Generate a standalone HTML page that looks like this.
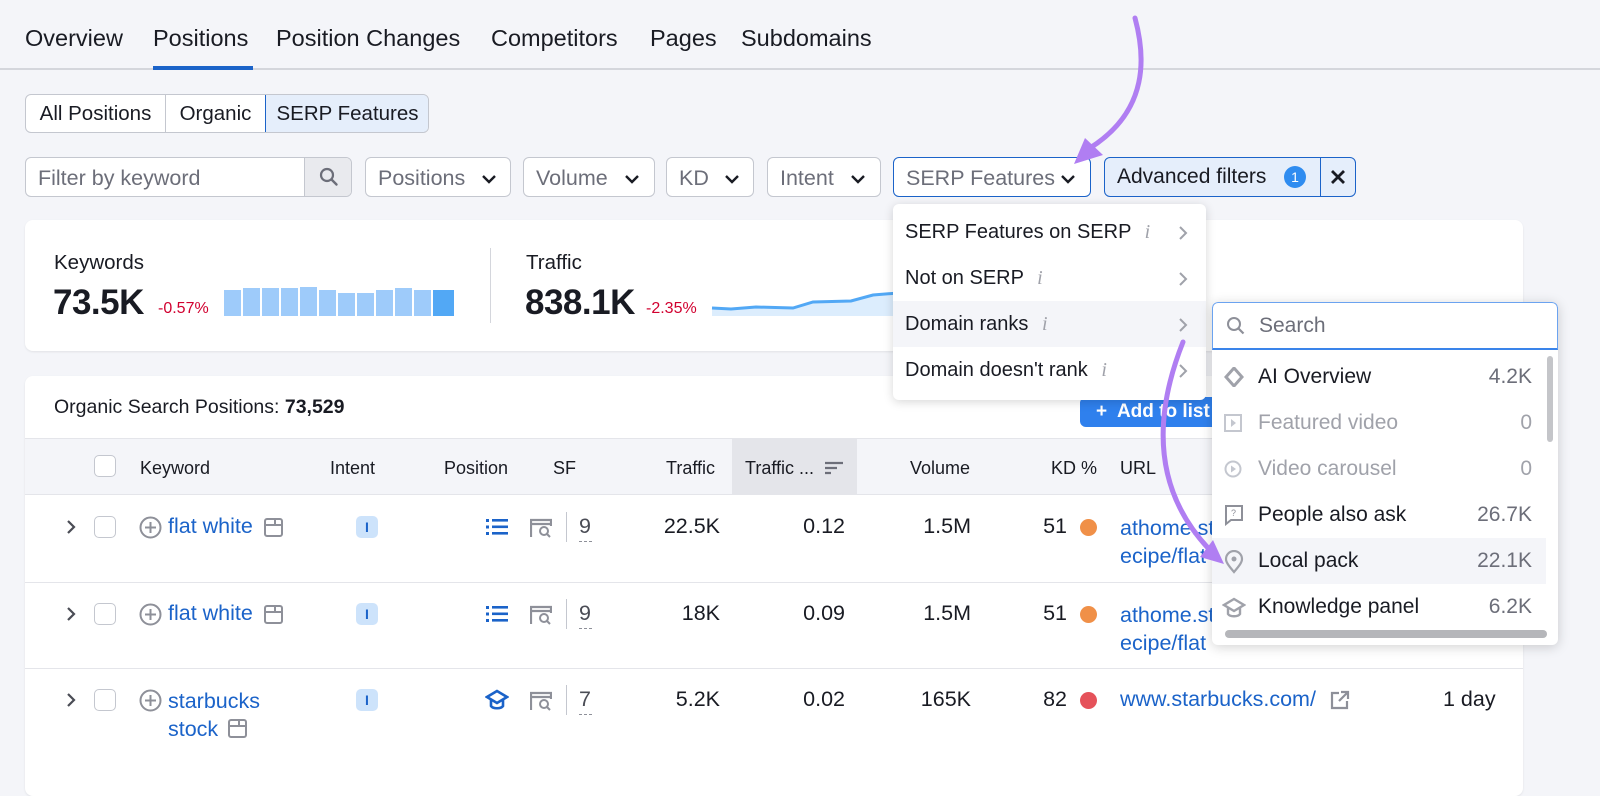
<!DOCTYPE html>
<html><head><meta charset="utf-8"><style>
*{box-sizing:border-box;margin:0;padding:0}
body{width:1600px;height:775px;overflow:hidden;background:#f4f5f9;font-family:"Liberation Sans",sans-serif;color:#191b23;position:relative}
.a{position:absolute}
.tab{position:absolute;top:25px;font-size:23.5px;color:#191b23}
.box{position:absolute;background:#fff;border:1px solid #c4c7cf;border-radius:6px}
.ft{position:absolute;font-size:21.5px;color:#6c6e79;top:8px}
.chev{position:absolute;top:16px}
.t20{font-size:21.5px;position:absolute}
.hd{position:absolute;top:19px;font-size:18px;color:#191b23}
.link{color:#1b63c9}
.cb{position:absolute;width:22px;height:22px;border:1.5px solid #c4c7cf;border-radius:5px;background:#fff}
.badge{position:absolute;width:22px;height:22px;border-radius:5px;background:#cde3fb;color:#1b63c9;font-size:14px;font-weight:bold;text-align:center;line-height:22px}
.num{position:absolute;font-size:21.5px;text-align:right}
.mi{position:absolute;left:0;width:313px;height:46px;font-size:20px;padding-left:12px;line-height:46px}
.si{position:absolute;left:0;width:334px;height:46px;font-size:21px;line-height:46px}
.si span.n{position:absolute;left:46px}
.si span.v{position:absolute;right:14px;color:#6c6e79}
</style></head><body>

<div class="tab" style="left:25px">Overview</div>
<div class="tab" style="left:153px">Positions</div>
<div class="tab" style="left:276px">Position Changes</div>
<div class="tab" style="left:491px">Competitors</div>
<div class="tab" style="left:650px">Pages</div>
<div class="tab" style="left:741px">Subdomains</div>
<div class="a" style="left:0;top:68px;width:1600px;height:2px;background:#d4d6dc"></div>
<div class="a" style="left:153px;top:66px;width:100px;height:4px;background:#1b63c9"></div>

<div class="a" style="left:25px;top:94px;width:404px;height:39px;border:1px solid #c4c7cf;border-radius:6px;background:#fff;overflow:hidden">
 <div class="a" style="left:0;top:0;width:140px;height:37px;border-right:1px solid #c4c7cf;font-size:20.5px;line-height:37px;text-align:center">All Positions</div>
 <div class="a" style="left:140px;top:0;width:99px;height:37px;font-size:20.5px;line-height:37px;text-align:center">Organic</div>
 <div class="a" style="left:239px;top:-1px;width:165px;height:39px;background:#e5eefb;border:1px solid #1b63c9;border-radius:0 6px 6px 0;font-size:20.5px;line-height:37px;text-align:center">SERP Features</div>
</div>

<div class="box" style="left:25px;top:157px;width:327px;height:40px;overflow:hidden">
 <div class="ft" style="left:12px">Filter by keyword</div>
 <div class="a" style="left:278px;top:0;width:48px;height:38px;background:#e9eaee;border-left:1px solid #c4c7cf">
  <svg class="a" style="left:14px;top:9px" width="20" height="20" viewBox="0 0 20 20"><circle cx="8" cy="8" r="6" fill="none" stroke="#6c6e79" stroke-width="2.2"/><path d="M12.5 12.5l5 5" stroke="#6c6e79" stroke-width="2.4" stroke-linecap="round"/></svg>
 </div>
</div>
<div class="box" style="left:365px;top:157px;width:146px;height:40px"><div class="ft" style="left:12px">Positions</div><svg class="chev" style="left:115px" width="16" height="10" viewBox="0 0 16 10"><path d="M2 2l6 6 6-6" fill="none" stroke="#191b23" stroke-width="2.4"/></svg></div>
<div class="box" style="left:523px;top:157px;width:132px;height:40px"><div class="ft" style="left:12px">Volume</div><svg class="chev" style="left:100px" width="16" height="10" viewBox="0 0 16 10"><path d="M2 2l6 6 6-6" fill="none" stroke="#191b23" stroke-width="2.4"/></svg></div>
<div class="box" style="left:666px;top:157px;width:88px;height:40px"><div class="ft" style="left:12px">KD</div><svg class="chev" style="left:57px" width="16" height="10" viewBox="0 0 16 10"><path d="M2 2l6 6 6-6" fill="none" stroke="#191b23" stroke-width="2.4"/></svg></div>
<div class="box" style="left:767px;top:157px;width:114px;height:40px"><div class="ft" style="left:12px">Intent</div><svg class="chev" style="left:82px" width="16" height="10" viewBox="0 0 16 10"><path d="M2 2l6 6 6-6" fill="none" stroke="#191b23" stroke-width="2.4"/></svg></div>
<div class="box" style="left:893px;top:157px;width:198px;height:40px;border-color:#1b63c9"><div class="ft" style="left:12px">SERP Features</div><svg class="chev" style="left:166px" width="16" height="10" viewBox="0 0 16 10"><path d="M2 2l6 6 6-6" fill="none" stroke="#191b23" stroke-width="2.4"/></svg></div>
<div class="a" style="left:1104px;top:157px;width:252px;height:40px;border:1px solid #1b63c9;border-radius:6px;background:#e5eefb">
 <div class="a" style="left:12px;top:7px;font-size:21px">Advanced filters</div>
 <div class="a" style="left:179px;top:8px;width:22px;height:22px;border-radius:11px;background:#2f8cf0;color:#fff;font-size:14px;text-align:center;line-height:22px">1</div>
 <div class="a" style="left:215px;top:0;width:1px;height:38px;background:#1b63c9"></div>
 <svg class="a" style="left:225px;top:11px" width="16" height="16" viewBox="0 0 16 16"><path d="M2 2l12 12M14 2L2 14" stroke="#191b23" stroke-width="2.8"/></svg>
</div>

<div class="a" style="left:25px;top:220px;width:1498px;height:131px;background:#fff;border-radius:8px;box-shadow:0 1px 2px rgba(0,0,0,.08)">
 <div class="a" style="left:29px;top:31px;font-size:20.5px">Keywords</div>
 <div class="a" style="left:28px;top:63px;font-size:35px;font-weight:bold;letter-spacing:-0.5px">73.5K</div>
 <div class="a" style="left:133px;top:80px;font-size:16px;color:#d1002f">-0.57%</div>
 <svg class="a" style="left:199px;top:66px" width="232" height="30">
  <g fill="#9ecbfa">
   <rect x="0" y="4" width="17" height="26"/><rect x="19" y="2" width="17" height="28"/><rect x="38" y="2" width="17" height="28"/><rect x="57" y="2" width="17" height="28"/><rect x="76" y="1" width="17" height="29"/><rect x="95" y="4" width="17" height="26"/><rect x="114" y="7" width="17" height="23"/><rect x="133" y="7" width="17" height="23"/><rect x="152" y="4" width="17" height="26"/><rect x="171" y="2" width="17" height="28"/><rect x="190" y="4" width="17" height="26"/></g>
  <rect x="209" y="4" width="21" height="26" fill="#52a8f5"/>
 </svg>
 <div class="a" style="left:465px;top:28px;width:1px;height:75px;background:#d4d6dc"></div>
 <div class="a" style="left:501px;top:31px;font-size:20.5px">Traffic</div>
 <div class="a" style="left:500px;top:63px;font-size:35px;font-weight:bold;letter-spacing:-0.5px">838.1K</div>
 <div class="a" style="left:621px;top:80px;font-size:16px;color:#d1002f">-2.35%</div>
 <svg class="a" style="left:686px;top:60px" width="200" height="36"><path d="M1 28 L20 29 L45 27 L82 28 L102 22 L140 21 L162 15 L200 12 L200 36 L1 36Z" fill="#dcedfd"/><path d="M1 28 L20 29 L45 27 L82 28 L102 22 L140 21 L162 15 L200 12" fill="none" stroke="#52a8f5" stroke-width="3"/></svg>
</div>

<div class="a" style="left:25px;top:376px;width:1498px;height:420px;background:#fff;border-radius:8px;box-shadow:0 1px 2px rgba(0,0,0,.08);overflow:hidden">
 <div class="a" style="left:29px;top:20px;font-size:19.5px">Organic Search Positions: <b>73,529</b></div>
 <div class="a" style="left:1055px;top:21px;width:150px;height:30px;background:#2f80ed;border-radius:6px;color:#fff;font-size:19px;font-weight:bold;line-height:30px;padding-left:16px">+&nbsp; Add to list</div>
 <div class="a" style="left:0;top:62px;width:1498px;height:57px;background:#f4f5f9;border-top:1px solid #e4e5ea;border-bottom:1px solid #e4e5ea">
  <div class="a" style="left:707px;top:0;width:125px;height:56px;background:#e4e5ea"></div>
  <div class="cb" style="left:69px;top:16px"></div>
  <div class="hd" style="left:115px">Keyword</div>
  <div class="hd" style="left:305px">Intent</div>
  <div class="hd" style="left:419px">Position</div>
  <div class="hd" style="left:528px">SF</div>
  <div class="hd" style="left:641px">Traffic</div>
  <div class="hd" style="left:720px">Traffic ...</div>
  <svg class="a" style="left:800px;top:22px" width="18" height="14"><path d="M0 2h18M0 7h12M0 12h6" stroke="#6c6e79" stroke-width="2.2"/></svg>
  <div class="hd" style="left:885px">Volume</div>
  <div class="hd" style="left:1026px">KD %</div>
  <div class="hd" style="left:1095px">URL</div>
 </div>
 <div class="a" style="left:0;top:206px;width:1498px;height:1px;background:#e4e5ea"></div>
 <div class="a" style="left:0;top:292px;width:1498px;height:1px;background:#e4e5ea"></div>
</div>

<!-- row1 -->
<svg class="a" style="left:66px;top:520px" width="10" height="14"><path d="M2 1l6 6-6 6" fill="none" stroke="#4a4c55" stroke-width="2.2"/></svg>
<div class="cb" style="left:94px;top:516px"></div>
<svg class="a" style="left:139px;top:516px" width="23" height="23"><circle cx="11.5" cy="11.5" r="10" fill="none" stroke="#8e9099" stroke-width="2"/><path d="M11.5 6v11M6 11.5h11" stroke="#8e9099" stroke-width="2"/></svg>
<div class="t20 link" style="left:168px;top:514px">flat white</div>
<svg class="a" style="left:264px;top:518px" width="19" height="19"><rect x="1" y="1" width="17" height="17" rx="2" fill="none" stroke="#8e9099" stroke-width="2"/><path d="M1 7h17M11 1v6" stroke="#8e9099" stroke-width="2"/></svg>
<div class="badge" style="left:356px;top:516px">I</div>
<svg class="a" style="left:486px;top:518px" width="22" height="18"><g fill="#1b63c9"><rect x="0" y="1" width="3" height="3"/><rect x="0" y="7.5" width="3" height="3"/><rect x="0" y="14" width="3" height="3"/><rect x="6" y="1" width="16" height="2.6"/><rect x="6" y="7.5" width="16" height="2.6"/><rect x="6" y="14" width="16" height="2.6"/></g></svg>
<svg class="a" style="left:530px;top:518px" width="22" height="20"><path d="M1 19V2h20v6M1 6h20" fill="none" stroke="#8e9099" stroke-width="2.2"/><circle cx="14" cy="13" r="4" fill="none" stroke="#8e9099" stroke-width="2"/><path d="M17 16l3 3" stroke="#8e9099" stroke-width="2"/></svg>
<div class="a" style="left:566px;top:512px;width:1px;height:30px;background:#c4c7cf"></div>
<div class="t20" style="left:579px;top:514px;color:#4a4c55">9</div><div class="a" style="left:579px;top:541px;width:13px;border-top:1.5px dashed #8e9099"></div>
<div class="num" style="left:620px;width:100px;top:514px">22.5K</div>
<div class="num" style="left:745px;width:100px;top:514px">0.12</div>
<div class="num" style="left:871px;width:100px;top:514px">1.5M</div>
<div class="num" style="left:1017px;width:50px;top:514px">51</div>
<div class="a" style="left:1080px;top:519px;width:17px;height:17px;border-radius:9px;background:#f09048"></div>
<div class="t20 link" style="left:1120px;top:514px;line-height:28px">athome.st<br>ecipe/flat</div>

<!-- row2 -->
<svg class="a" style="left:66px;top:607px" width="10" height="14"><path d="M2 1l6 6-6 6" fill="none" stroke="#4a4c55" stroke-width="2.2"/></svg>
<div class="cb" style="left:94px;top:603px"></div>
<svg class="a" style="left:139px;top:603px" width="23" height="23"><circle cx="11.5" cy="11.5" r="10" fill="none" stroke="#8e9099" stroke-width="2"/><path d="M11.5 6v11M6 11.5h11" stroke="#8e9099" stroke-width="2"/></svg>
<div class="t20 link" style="left:168px;top:601px">flat white</div>
<svg class="a" style="left:264px;top:605px" width="19" height="19"><rect x="1" y="1" width="17" height="17" rx="2" fill="none" stroke="#8e9099" stroke-width="2"/><path d="M1 7h17M11 1v6" stroke="#8e9099" stroke-width="2"/></svg>
<div class="badge" style="left:356px;top:603px">I</div>
<svg class="a" style="left:486px;top:605px" width="22" height="18"><g fill="#1b63c9"><rect x="0" y="1" width="3" height="3"/><rect x="0" y="7.5" width="3" height="3"/><rect x="0" y="14" width="3" height="3"/><rect x="6" y="1" width="16" height="2.6"/><rect x="6" y="7.5" width="16" height="2.6"/><rect x="6" y="14" width="16" height="2.6"/></g></svg>
<svg class="a" style="left:530px;top:605px" width="22" height="20"><path d="M1 19V2h20v6M1 6h20" fill="none" stroke="#8e9099" stroke-width="2.2"/><circle cx="14" cy="13" r="4" fill="none" stroke="#8e9099" stroke-width="2"/><path d="M17 16l3 3" stroke="#8e9099" stroke-width="2"/></svg>
<div class="a" style="left:566px;top:599px;width:1px;height:30px;background:#c4c7cf"></div>
<div class="t20" style="left:579px;top:601px;color:#4a4c55">9</div><div class="a" style="left:579px;top:628px;width:13px;border-top:1.5px dashed #8e9099"></div>
<div class="num" style="left:620px;width:100px;top:601px">18K</div>
<div class="num" style="left:745px;width:100px;top:601px">0.09</div>
<div class="num" style="left:871px;width:100px;top:601px">1.5M</div>
<div class="num" style="left:1017px;width:50px;top:601px">51</div>
<div class="a" style="left:1080px;top:606px;width:17px;height:17px;border-radius:9px;background:#f09048"></div>
<div class="t20 link" style="left:1120px;top:601px;line-height:28px">athome.st<br>ecipe/flat</div>

<!-- row3 -->
<svg class="a" style="left:66px;top:693px" width="10" height="14"><path d="M2 1l6 6-6 6" fill="none" stroke="#4a4c55" stroke-width="2.2"/></svg>
<div class="cb" style="left:94px;top:689px"></div>
<svg class="a" style="left:139px;top:689px" width="23" height="23"><circle cx="11.5" cy="11.5" r="10" fill="none" stroke="#8e9099" stroke-width="2"/><path d="M11.5 6v11M6 11.5h11" stroke="#8e9099" stroke-width="2"/></svg>
<div class="t20 link" style="left:168px;top:687px;line-height:28px">starbucks<br>stock</div>
<svg class="a" style="left:228px;top:719px" width="19" height="19"><rect x="1" y="1" width="17" height="17" rx="2" fill="none" stroke="#8e9099" stroke-width="2"/><path d="M1 7h17M11 1v6" stroke="#8e9099" stroke-width="2"/></svg>
<div class="badge" style="left:356px;top:689px">I</div>
<svg class="a" style="left:485px;top:689px" width="24" height="22"><path d="M12 2L2 8l10 6 10-6z" fill="none" stroke="#1b63c9" stroke-width="2.6"/><path d="M6 11v6c2 3 10 3 12 0v-6" fill="none" stroke="#1b63c9" stroke-width="2.6"/></svg>
<svg class="a" style="left:530px;top:691px" width="22" height="20"><path d="M1 19V2h20v6M1 6h20" fill="none" stroke="#8e9099" stroke-width="2.2"/><circle cx="14" cy="13" r="4" fill="none" stroke="#8e9099" stroke-width="2"/><path d="M17 16l3 3" stroke="#8e9099" stroke-width="2"/></svg>
<div class="a" style="left:566px;top:685px;width:1px;height:30px;background:#c4c7cf"></div>
<div class="t20" style="left:579px;top:687px;color:#4a4c55">7</div><div class="a" style="left:579px;top:714px;width:13px;border-top:1.5px dashed #8e9099"></div>
<div class="num" style="left:620px;width:100px;top:687px">5.2K</div>
<div class="num" style="left:745px;width:100px;top:687px">0.02</div>
<div class="num" style="left:871px;width:100px;top:687px">165K</div>
<div class="num" style="left:1017px;width:50px;top:687px">82</div>
<div class="a" style="left:1080px;top:692px;width:17px;height:17px;border-radius:9px;background:#e5525a"></div>
<div class="t20 link" style="left:1120px;top:687px">www.starbucks.com/</div>
<svg class="a" style="left:1330px;top:690px" width="20" height="20"><path d="M9 3H2v15h15v-7" fill="none" stroke="#8e9099" stroke-width="2.2"/><path d="M11 2h7v7M18 2l-9 9" fill="none" stroke="#8e9099" stroke-width="2.2"/></svg>
<div class="t20" style="left:1443px;top:687px">1 day</div>

<!-- dropdown 1 -->
<div class="a" style="left:893px;top:204px;width:313px;height:196px;background:#fff;border-radius:6px;box-shadow:0 2px 10px rgba(0,0,0,.16);overflow:hidden">
 <div class="mi" style="top:5px">SERP Features on SERP <i style="color:#a0a2aa;font-family:'Liberation Serif',serif;margin-left:8px">i</i></div>
 <div class="mi" style="top:51px">Not on SERP <i style="color:#a0a2aa;font-family:'Liberation Serif',serif;margin-left:8px">i</i></div>
 <div class="mi" style="top:97px;background:#f4f5f9">Domain ranks <i style="color:#a0a2aa;font-family:'Liberation Serif',serif;margin-left:8px">i</i></div>
 <div class="mi" style="top:143px">Domain doesn't rank <i style="color:#a0a2aa;font-family:'Liberation Serif',serif;margin-left:8px">i</i></div>
 <svg class="a" style="left:285px;top:21px" width="10" height="16"><path d="M2 2l6 6-6 6" fill="none" stroke="#a0a2aa" stroke-width="2"/></svg>
 <svg class="a" style="left:285px;top:67px" width="10" height="16"><path d="M2 2l6 6-6 6" fill="none" stroke="#a0a2aa" stroke-width="2"/></svg>
 <svg class="a" style="left:285px;top:113px" width="10" height="16"><path d="M2 2l6 6-6 6" fill="none" stroke="#a0a2aa" stroke-width="2"/></svg>
 <svg class="a" style="left:285px;top:159px" width="10" height="16"><path d="M2 2l6 6-6 6" fill="none" stroke="#a0a2aa" stroke-width="2"/></svg>
</div>

<!-- submenu -->
<div class="a" style="left:1212px;top:302px;width:346px;height:343px;background:#fff;border-radius:6px;box-shadow:0 2px 12px rgba(0,0,0,.18);overflow:hidden">
 <div class="a" style="left:0;top:0;width:346px;height:48px;border:1px solid #6ba3f0;border-bottom:2px solid #3a84ea;border-radius:6px 6px 0 0">
  <svg class="a" style="left:13px;top:13px" width="20" height="20"><circle cx="8" cy="8" r="6" fill="none" stroke="#8e9099" stroke-width="2"/><path d="M12.5 12.5l5 5" stroke="#8e9099" stroke-width="2.2"/></svg>
  <div class="a" style="left:46px;top:11px;font-size:21px;color:#6c6e79">Search</div>
 </div>
 <div class="si" style="top:52px"><svg class="a" style="left:12px;top:13px" width="20" height="20"><path d="M10 1l8 9-8 9-8-9z" fill="none" stroke="#a0a2aa" stroke-width="3"/></svg><span class="n">AI Overview</span><span class="v">4.2K</span></div>
 <div class="si" style="top:98px;color:#a0a2aa"><svg class="a" style="left:12px;top:14px" width="18" height="18"><rect x="1" y="1" width="16" height="16" fill="none" stroke="#c4c7cf" stroke-width="2"/><path d="M7 5l5 4-5 4z" fill="#c4c7cf"/></svg><span class="n">Featured video</span><span class="v" style="color:#a0a2aa">0</span></div>
 <div class="si" style="top:144px;color:#a0a2aa"><svg class="a" style="left:12px;top:14px" width="18" height="18"><circle cx="9" cy="9" r="7.5" fill="none" stroke="#c4c7cf" stroke-width="2"/><path d="M7 5.5l5 3.5-5 3.5z" fill="#c4c7cf"/></svg><span class="n">Video carousel</span><span class="v" style="color:#a0a2aa">0</span></div>
 <div class="si" style="top:190px"><svg class="a" style="left:12px;top:12px" width="20" height="22"><path d="M2 2h16v14H7l-5 4z" fill="none" stroke="#8e9099" stroke-width="2"/><text x="7" y="12" font-size="9" fill="#8e9099" font-family="Liberation Sans">?</text></svg><span class="n">People also ask</span><span class="v">26.7K</span></div>
 <div class="si" style="top:236px;background:#f4f5f9"><svg class="a" style="left:12px;top:12px" width="20" height="24"><path d="M10 22C4 15 2 12 2 9a8 8 0 0 1 16 0c0 3-2 6-8 13z" fill="none" stroke="#a0a2aa" stroke-width="2.2"/><circle cx="10" cy="9" r="2.5" fill="#a0a2aa"/></svg><span class="n">Local pack</span><span class="v">22.1K</span></div>
 <div class="si" style="top:282px"><svg class="a" style="left:10px;top:13px" width="24" height="22"><path d="M12 2L2 8l10 6 10-6z" fill="none" stroke="#a0a2aa" stroke-width="2.4"/><path d="M6 11v6c2 3 10 3 12 0v-6" fill="none" stroke="#a0a2aa" stroke-width="2.4"/></svg><span class="n">Knowledge panel</span><span class="v">6.2K</span></div>
 <div class="a" style="left:13px;top:328px;width:322px;height:8px;border-radius:4px;background:#b5b6ba"></div>
 <div class="a" style="left:335px;top:54px;width:6px;height:86px;border-radius:3px;background:#c4c5c9"></div>
</div>

<svg class="a" style="left:0;top:0" width="1600" height="775">
 <path d="M1135 18 C1145 55 1150 110 1090 148" fill="none" stroke="#b07ef2" stroke-width="5" stroke-linecap="round"/>
 <path d="M1074 164 L1103 155 L1085 138 Z" fill="#b07ef2"/>
 <path d="M1183 342 C1160 400 1145 480 1208 548" fill="none" stroke="#b07ef2" stroke-width="5" stroke-linecap="round"/>
 <path d="M1224 564 L1200 557 L1213 540 Z" fill="#b07ef2"/>
</svg>
</body></html>
